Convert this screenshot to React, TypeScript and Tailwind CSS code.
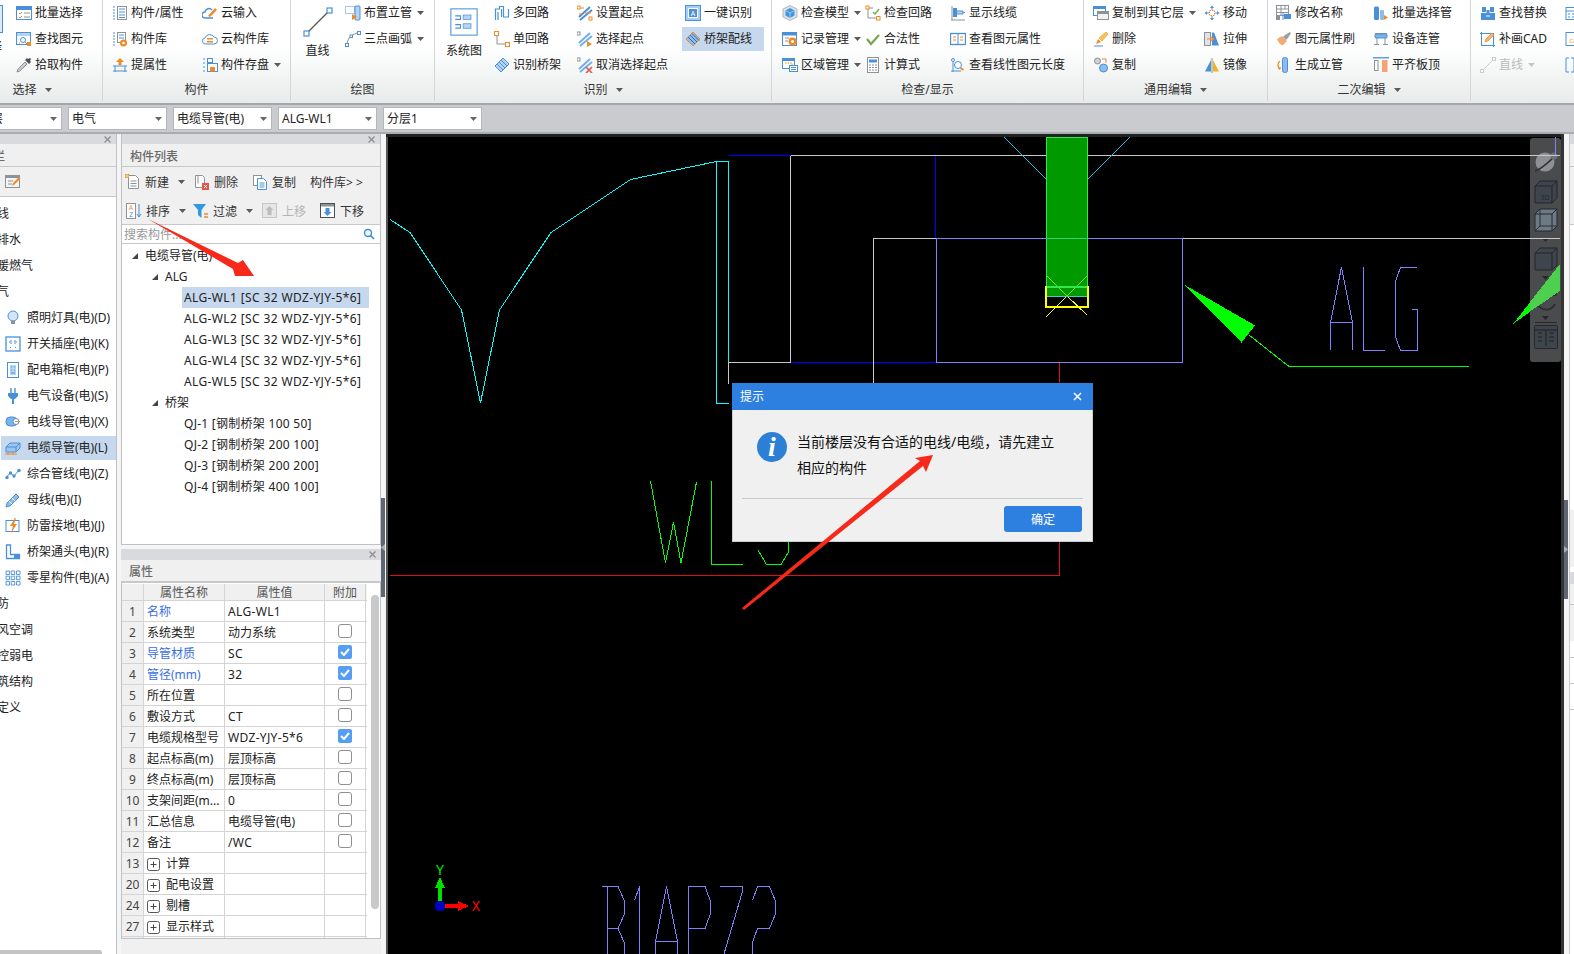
import React from "react";

const B = "#4a90d9", L = "#b5d3f3", O = "#f08a24", G = "#8d9298", D = "#4a5058";

const ICONS: Record<string, React.ReactNode> = {
  plxz: <><rect x=".5" y="1.5" width="15" height="13" fill="#fff" stroke={B} /><rect x="1" y="2" width="14" height="3" fill={B} /><path d="M3 8l1 1 2-2M3 12l1 1 2-2" stroke={O} /><path d="M8 8h6M8 12h6" stroke={G} /></>,
  czty: <><rect x=".5" y="1.5" width="14" height="12" fill="#fff" stroke={B} /><rect x="1" y="2" width="13" height="3" fill={L} /><circle cx="7" cy="9" r="2.5" stroke={B} /><path d="M4 12h-1M9 11l2 2" stroke={G} /><rect x="11" y="11" width="4" height="4" fill={O} /></>,
  nqgj: <><path d="M1 15l1-3 7-7 2 2-7 7z" fill="#c9ccd0" stroke={G} /><path d="M9 3l4 4 2-2-1-1 1-2-1-1-2 1-1-1z" fill={D} /></>,
  gjsx: <><path d="M1 2h2M1 5h2M1 8h2M1 11h2M1 14h2" stroke={B} /><rect x="5.5" y="1.5" width="9" height="13" fill="#fff" stroke={G} /><path d="M7 4h6M7 7h6M7 10h6M7 12.500h6" stroke={B} /></>,
  syr: <><path d="M3 13a3 3 0 0 1 0-6 4 4 0 0 1 7-2" stroke={B} strokeWidth="1.5" /><path d="M3 13h8" stroke={B} strokeWidth="1.5" /><path d="M6 11l7-8 2 2-7 7z" fill={O} /></>,
  gjk: <><path d="M1 2h2M1 5h2M1 8h2M1 11h2M1 14h2" stroke={B} /><rect x="5.500" y="1.500" width="8" height="10" fill="#fff" stroke={G} /><path d="M7 4h5M7 7h5" stroke={B} /><circle cx="11.500" cy="12" r="3.500" fill={O} /><circle cx="11.500" cy="12" r="1.300" fill="#fff" /></>,
  ygjk: <><path d="M4 13a3 3 0 0 1-1-6 5 5 0 0 1 9-1 3.500 3.500 0 0 1 0 7z" fill="#fff" stroke={B} /><rect x="5" y="7" width="6" height="1.500" fill={O} /><rect x="5" y="10" width="6" height="1.500" fill={O} /></>,
  tsx: <><path d="M8 1l4 4H9.500v3h-3V5H4z" fill={O} /><path d="M1 9h14M3 9v6M13 9v6M1 14h14" stroke={B} /></>,
  gjcp: <><path d="M1 2h2M1 6h2M1 10h2M1 14h2" stroke={B} /><rect x="5.500" y="1.500" width="5" height="4" fill="#fff" stroke={B} /><rect x="5.500" y="6.500" width="10" height="8" fill="#fff" stroke={B} /><rect x="8" y="10" width="5" height="4.500" fill={O} /></>,
  bzlg: <><rect x=".5" y="1.500" width="9" height="7" fill="#fff" stroke={B} strokeDasharray="1 1" /><rect x="10" y="1" width="5" height="14" rx="1" fill={L} stroke={B} /><path d="M7 9l5 3-5 3z" fill={O} /></>,
  sdhh: <><path d="M2 14C2 8 6 4 12 2" stroke={G} /><rect x=".5" y="12.500" width="3" height="3" fill="#fff" stroke={B} /><rect x="12.500" y=".5" width="3" height="3" fill="#fff" stroke={B} /><rect x="5" y="4" width="2.500" height="2.500" fill="#fff" stroke={B} /></>,
  xl: <><path d="M2.500 13.500l11-11" stroke="#555" strokeWidth=".6" /><rect x="1" y="12.500" width="2.500" height="2.500" fill="#fff" stroke={B} strokeWidth=".6" /><rect x="12.500" y="1" width="2.500" height="2.500" fill="#fff" stroke={B} strokeWidth=".6" /></>,
  xtt: <><rect x=".5" y=".5" width="15" height="15" fill="#fff" stroke={B} strokeWidth=".6" /><rect x="7.500" y="4" width="4.500" height="2.600" fill={L} stroke={B} strokeWidth=".4" /><rect x="7.500" y="9" width="4.500" height="2.600" fill={L} stroke={B} strokeWidth=".4" /><path d="M3 4.500h3v2H3M3 9.500h3v2H3" stroke={B} strokeWidth=".6" /></>,
  dhl: <><path d="M1.500 15V4h4V1.500h4V12h5V4M4 15V7M7.500 12V4" stroke={B} strokeWidth="1.200" /></>,
  dhl1: <><path d="M3 3v10h9" stroke={G} /><rect x=".5" y=".5" width="4" height="4" fill="#fff" stroke={O} /><rect x="11.500" y="11.500" width="4" height="4" fill="#fff" stroke={O} /></>,
  sbqj: <><path d="M1 9l8-8 6 6-8 8z" fill={L} stroke={B} /><path d="M5 5l6 6M7 3l6 6M3 7l6 6" stroke={B} /></>,
  szqd: <><path d="M2 12L13 2M3 15L15 5" stroke={B} strokeWidth="2" /><path d="M2 3h5M8 8h6M2 9h3" stroke={O} /><rect x="0" y="1" width="3" height="3" fill="#fff" stroke={O} /><rect x="12" y="12" width="3" height="3" fill="#fff" stroke={O} /></>,
  xzqd: <><path d="M2 12L13 2M3 15L15 5" stroke="#73b0ee" strokeWidth="2" /><rect x="0" y="1" width="3" height="3" fill="#fff" stroke={G} /><path d="M10 10l5 3-5 3z" fill={O} /></>,
  qxqd: <><path d="M2 12L13 2M3 15L15 5" stroke="#73b0ee" strokeWidth="2" /><rect x="0" y="1" width="3" height="3" fill="#fff" stroke={G} /><path d="M9 10l6 6M15 10l-6 6" stroke="#e2574c" strokeWidth="1.600" /></>,
  yjsb: <><rect x=".5" y=".5" width="15" height="15" fill="#a7cdf3" stroke={B} /><rect x="3.500" y="3.500" width="9" height="9" fill={B} stroke="#fff" /><text x="8" y="11" fontSize="7" fill="#fff" textAnchor="middle">A</text></>,
  qjpx: <><path d="M1 8l7-7 7 7-7 7z" fill="#8fbdf0" stroke={O} /><path d="M5 4l7 7M7 2.500l7 7M3 6l7 7" stroke="#2f6db5" /></>,
  jcmx: <><path d="M8 .5l7 3.500v8l-7 3.500-7-3.500V4z" fill="#dde0e3" stroke="#b3b7bc" /><path d="M8 3l4.500 2.500v5L8 13l-4.500-2.500v-5z" fill="#3f95e0" /><path d="M3.500 5.500L8 8l4.500-2.500M8 8v5" stroke="#bfe0fb" strokeWidth=".7" /></>,
  jlgl: <><rect x=".5" y="1.500" width="14" height="13" fill="#fff" stroke={B} /><rect x="1" y="2" width="13" height="2.500" fill={B} /><path d="M3 7h4M3 10h3" stroke={G} /><circle cx="10.500" cy="10.500" r="4" fill={O} /><circle cx="10.500" cy="10.500" r="1.500" fill="#fff" /></>,
  qygl: <><rect x=".5" y="1.500" width="12" height="10" fill="#fff" stroke={B} /><rect x="1" y="2" width="11" height="2" fill={B} /><path d="M3 6h7v3" stroke={O} strokeDasharray="1.500 1" /><rect x="7.500" y="8.500" width="8" height="6" fill="#fff" stroke={B} /><path d="M9 10.500h5M9 12.500h5" stroke={B} /></>,
  jchl: <><path d="M3 3v10h9M4 3h4" stroke={G} /><rect x="1" y="1" width="3" height="3" fill="#fff" stroke={O} /><rect x="11.500" y="11.500" width="3.500" height="3.500" fill="#fff" stroke={O} /><path d="M8 7l2 2 4-5" stroke="#6fa84a" strokeWidth="1.300" /></>,
  hfx: <path d="M2 8l4 5 8-9" stroke="#72a94a" strokeWidth="2.200" />,
  jss: <><rect x="2.500" y=".5" width="11" height="15" fill="#fff" stroke={G} /><rect x="4" y="2.500" width="8" height="3" fill={B} /><path d="M4 8h2M7 8h2M10 8h2M4 10.500h2M7 10.500h2M10 10.500h2M4 13h2M7 13h2M10 13h2" stroke={G} /></>,
  xsxl: <><path d="M2 1v14M1 15h14" stroke={G} /><rect x="3" y="3" width="4" height="9" fill={B} /><path d="M7 6h6v3H7" fill={L} stroke={B} /><path d="M13 7.500h2" stroke={B} /></>,
  ckty: <><rect x=".5" y="2.500" width="15" height="11" fill="#fff" stroke={B} strokeWidth="1.300" /><path d="M8 3v10" stroke={B} /><path d="M3 6h3M3 9h3M10 6h3M10 9h3" stroke={O} /></>,
  ckcd: <><path d="M3 1v14M1 14h10" stroke={B} /><circle cx="3" cy="3" r="1.500" fill="#fff" stroke={B} /><circle cx="8" cy="8" r="3.500" fill="#fff" stroke={B} /><path d="M10.500 11l3 2" stroke={O} strokeWidth="2" /></>,
  fzdq: <><rect x=".5" y="1.500" width="12" height="9" fill="#fff" stroke={B} /><rect x="1" y="2" width="11" height="2" fill={B} /><rect x="4.500" y="6.500" width="11" height="8" fill="#f2f2f2" stroke={G} /><rect x="5" y="7" width="10" height="2" fill={G} /></>,
  sc: <><path d="M1 15h9" stroke={B} /><path d="M3 13l2-5 3 3z" fill={O} /><path d="M6 7l7-6 2 2-6 7z" fill="#f2c65a" stroke={O} strokeWidth=".6" /></>,
  fz: <><circle cx="4.500" cy="4" r="3" fill="#cfd2d6" stroke={G} /><circle cx="10.500" cy="11" r="4" fill="#8cbcee" stroke={B} /><path d="M9 2h4v4" stroke={O} /></>,
  yd: <><path d="M8 .5l2 2.500H6zM8 15.500L6 13h4zM.5 8L3 6v4zM15.500 8L13 10V6z" fill={B} /><path d="M8 3v2M8 11v2M3 8h2M11 8h2" stroke={B} /><rect x="5.500" y="5.500" width="5" height="5" fill="#fff" stroke={O} strokeDasharray="1.500 1" /></>,
  ls: <><rect x=".5" y="1.500" width="6" height="13" fill="#e1e3e6" stroke={G} /><path d="M8 14.500V1.500h2l5 13z" fill={B} /><path d="M3 8h6M7 6l3 2-3 2" stroke={O} strokeWidth="1.100" /></>,
  jx: <><path d="M7 14.500H1L7 3z" fill={B} /><path d="M9 14.500h6L9 3z" fill="#f2b227" /><path d="M8 1v15" stroke={G} /></>,
  xgmc: <><rect x=".5" y=".5" width="12" height="10" fill="#fff" stroke={G} /><path d="M1 4h11M1 7.500h11M5 1v10M9 1v3" stroke={G} /><rect x="0" y="11" width="4" height="4" fill={G} /><path d="M7 7v8" stroke={B} /><rect x="8" y="9" width="7" height="5" fill={B} /></>,
  tysx: <><path d="M1 8l5-3 5 5-4 4c-2 1-5-3-6-6z" fill="#f3a877" /><path d="M7 6l2-2 5-3 1 1-3 5-2 2z" fill="#9b9ea3" /></>,
  sclg: <><path d="M4 4a5 5 0 0 0 0 8" stroke={O} strokeWidth="1.300" /><path d="M2 11l2 2 1-3z" fill={O} /><rect x="6.500" y=".5" width="5" height="15" rx="2" fill="#8cbcee" stroke={B} /></>,
  plxg: <><rect x="1" y="1.500" width="5" height="13.500" rx="1.500" fill={B} /><rect x="7" y="5" width="4" height="10" rx="1" fill="#8cbcee" /><path d="M11 10l4 2.500-4 2.500z" fill={O} /></>,
  sblg: <><path d="M2 2.500h12M1 13.500h5M10 13.500h5M4 7v6M12 7v6" stroke={G} /><rect x="2" y="3" width="12" height="4" rx="1" fill="#7db2ea" stroke={B} /></>,
  pqbd: <><path d="M0 .8h16" stroke={B} strokeWidth="1.300" /><rect x="1.500" y="3.500" width="3.500" height="10" fill="#fff" stroke={G} /><rect x="9" y="3" width="5.500" height="12" fill="#f7a275" /></>,
  czth: <><path d="M1 8h14v7H1zM2 2h4v5H2zM10 2h4v5h-4z" fill={B} /><rect x="6.500" y="5" width="3" height="3" fill={B} /><path d="M6 11h4" stroke="#fff" /></>,
  bhcad: <><rect x="1.500" y="2.500" width="12" height="12" fill="#fff" stroke={B} /><path d="M1.500 1v3M0 2.500h3M13.500 13v3M12 14.500h3" stroke={B} /><path d="M5 11l1-3 6-6 2 2-6 6z" fill="#f2b86a" stroke={O} strokeWidth=".7" /></>,
  zxd: <><path d="M2 14L14 2" stroke="#c9cbce" /><rect x=".5" y="12.500" width="3" height="3" fill="#fff" stroke="#c9cbce" /><rect x="12.500" y=".5" width="3" height="3" fill="#fff" stroke="#c9cbce" /></>,
  r1: <><rect x="1" y="2.500" width="14" height="12" fill="#fff" stroke={B} /><path d="M1 6h14" stroke={B} /><path d="M3 9h2M7 9h2M11 9h2M3 12h2M7 12h2M11 12h2" stroke={B} /></>,
  r2: <><rect x="1" y="1.500" width="14" height="13" fill="#fff" stroke={B} /><text x="8" y="12" fontSize="6" fill={O} textAnchor="middle">CA</text></>,
  r3: <path d="M4 1H1v14h3M6 1h3v14H6" stroke={B} />,
  zmdj: <><circle cx="8" cy="6" r="5" fill="#d3e6f7" stroke={B} /><path d="M6 11h4v3H6z" fill={G} /></>,
  kgcz: <><rect x="1" y="1" width="14" height="14" fill="#fff" stroke={B} strokeWidth="1.300" /><path d="M6 4v4M10 4v4M4 6h1M11 6h1M5 11l1 1M11 11l-1 1" stroke={B} /></>,
  pdxg: <><rect x="2.500" y=".5" width="11" height="15" fill="#fff" stroke={B} /><rect x="5" y="3" width="6" height="10" fill={L} /><path d="M6 5h1M9 5h1M6 8h1M9 8h1M6 11h4" stroke={B} /></>,
  dqsb: <><path d="M6 0v5M10 0v5" stroke={B} strokeWidth="1.400" /><path d="M3 5h10v3l-3 3H6L3 8z" fill={B} /><path d="M8 11v5" stroke={B} strokeWidth="2" /></>,
  dxdg: <><rect x="1" y="3" width="11" height="9" rx="4" fill="#7db2ea" stroke={B} /><circle cx="11" cy="7.500" r="3" fill="#fff" stroke={B} /><path d="M10 7.500h5" stroke={O} /></>,
  dlxg: <><path d="M1 7l4-4h10v5l-4 4H1z" fill="#9cc4ee" stroke={B} /><path d="M1 7h10v5M11 7l4-4" stroke={B} /><path d="M0 14h12M3 12v3M8 12v3" stroke={O} /></>,
  zhgx: <><path d="M1 12l4-5 4 3 5-6" stroke={B} /><circle cx="2" cy="11.500" r="1.700" fill={B} /><circle cx="5.500" cy="7" r="1.700" fill={B} /><circle cx="9" cy="10" r="1.700" fill={B} /><circle cx="14" cy="4.500" r="1.700" fill={B} /></>,
  mx: <><path d="M2 11L11 2l3 3-9 9-4 1z" fill="#8cbcee" stroke={B} /><path d="M4 9l3 3M7 6l3 3" stroke="#fff" /></>,
  fljd: <><rect x="1" y="2.500" width="13" height="11" fill="#fff" stroke={B} /><path d="M10 0L5 8h3l-2 7 6-9H9l2-6z" fill={O} /></>,
  qjtt: <><path d="M1.500 1v13.500h13v-4H5.500V1z" fill="#fff" stroke={B} strokeWidth="1.300" /><rect x="9" y="11" width="6" height="3.500" fill={B} /></>,
  lxgj: <><path d="M1 1h3.500v3.500H1zM6.200 1h3.500v3.500H6.200zM11.500 1H15v3.500h-3.500zM1 6.200h3.500v3.500H1zM6.200 6.200h3.500v3.500H6.200zM11.500 6.200H15v3.500h-3.500zM1 11.500h3.500V15H1zM6.200 11.500h3.500V15H6.200zM11.500 11.500H15V15h-3.500z" fill="#fff" stroke={B} strokeWidth=".9" /></>,
  nav: <><rect x=".5" y="1.500" width="14" height="12" fill="#f5f5f5" stroke={G} /><rect x="1" y="2" width="13" height="2" fill={G} /><path d="M3 7h5M3 10h4" stroke={G} /><path d="M7 12l1-3 6-6 1.500 1.500-6 6z" fill={O} /></>,
  xj: <><path d="M3.500 1.500h7l3 3v10h-10z" fill="#fff" stroke={G} /><path d="M5.500 7h6M5.500 9.500h6M5.500 12h6" stroke={G} /><rect x="0" y="0" width="4" height="4" fill={O} /><path d="M0 2h4M2 0v4" stroke="#fff" strokeWidth=".6" /></>,
  sc2: <><path d="M1.500 1.500h7l2 2v10h-9z" fill="#fff" stroke={G} /><path d="M4 1.500v8" stroke={G} /><rect x="8" y="9" width="7" height="7" fill="#e2574c" /><path d="M10 11l3 3M13 11l-3 3" stroke="#fff" /></>,
  fz2: <><rect x="1.500" y="1.500" width="8" height="10" fill="#fff" stroke={G} /><path d="M5.500 4.500h6l3 3v8h-9z" fill="#fff" stroke={B} /><path d="M7.500 9h5M7.500 11h5M7.500 13h5" stroke={B} /></>,
  pxn: <><rect x=".5" y=".5" width="9" height="15" fill="#fff" stroke={G} /><text x="5" y="7" fontSize="6.500" fill={O} textAnchor="middle">A</text><text x="5" y="14" fontSize="6.500" fill={B} textAnchor="middle">Z</text><path d="M13 1v13M11 11l2 3 2-3" stroke={B} /></>,
  gl: <><path d="M0 1h13L8.500 7v8L5 12V7z" fill="#2f9ae0" /><path d="M11 11h4M11 14h4" stroke={O} strokeWidth="1.300" /></>,
  sy: <><rect x=".5" y=".5" width="14" height="14" fill="#e6e6e6" stroke="#c6c6c6" /><path d="M7.500 3l4 4H9.500v5h-4V7h-2z" fill="#bcbcbc" /></>,
  xy: <><rect x=".5" y=".5" width="14" height="14" fill="#fff" stroke={D} /><rect x="1" y="1" width="13" height="2.500" fill={G} /><path d="M5.500 5h4v4h2l-4 4-4-4h2z" fill={B} /></>,
};

const Ico = ({ n, s = 16 }: { n: string; s?: number }) => (
  <svg width={s} height={s} viewBox="0 0 16 16" fill="none" className="shrink-0">{ICONS[n]}</svg>
);

const Caret = ({ c = "#5a5a5a" }: { c?: string }) => (
  <svg width="7" height="4" viewBox="0 0 7 4" className="shrink-0"><path d="M0 0h7L3.500 4z" fill={c} /></svg>
);

const Close = () => (
  <svg width="7" height="7" viewBox="0 0 7 7" className="shrink-0"><path d="M.5.5l6 6M6.500.5l-6 6" stroke="#8a8d92" strokeWidth="1.300" /></svg>
);

const Item = ({ i, t, c, off, on }: { i: string; t: string; c?: boolean; off?: boolean; on?: boolean }) => (
  <div className={`flex h-[26px] items-center gap-[3px] whitespace-nowrap ${off ? "text-[#b9bbbe]" : "text-[#222]"}`}>
    <div className={on ? "flex h-[24px] w-[82px] items-center gap-[3px] bg-[#c6d8ee] pl-[3px]" : "flex items-center gap-[3px]"}>
      <Ico n={i} />
      <span>{t}</span>
    </div>
    {c && <span className="ml-[2px]"><Caret c={off ? "#c4c4c4" : "#5a5a5a"} /></span>}
  </div>
);

const Group = ({ label, caret, className, pad, children }: { label: string; caret?: boolean; className: string; pad: string; children: React.ReactNode }) => (
  <section className={`flex h-[101px] shrink-0 flex-col border-r border-[#d3d5d7] ${className}`}>
    <div className={`flex h-[78px] ${pad}`}>{children}</div>
    <div className="flex h-[23px] items-center justify-center gap-[8px] text-[#333]">
      <span>{label}</span>
      {caret && <Caret />}
    </div>
  </section>
);

const Big = ({ i, t, s, className }: { i: string; t: string; s: number; className: string }) => (
  <div className={`flex shrink-0 flex-col items-center ${className}`}>
    <div className="flex h-[40px] items-center pt-[4px]"><Ico n={i} s={s} /></div>
    <span className="mt-[3px] whitespace-nowrap leading-[16px] text-[#222]">{t}</span>
  </div>
);

const Ribbon = () => (
  <header className="flex h-[103px] shrink-0 bg-gradient-to-b from-white from-45% to-[#e8ebeb]">
    <Group label="选择" caret className="ml-[-38px] w-[141px]" pad="">
      <div className="relative w-[54px] shrink-0">
        <div className="ml-[12px] mt-[5px] h-[28px] w-[29px] border border-[#4a90d9] bg-[#dbe9f8]" />
        <span className="absolute left-[16px] top-[39px] leading-[16px]">选择</span>
      </div>
      <div>
        <Item i="plxz" t="批量选择" />
        <Item i="czty" t="查找图元" />
        <Item i="nqgj" t="拾取构件" />
      </div>
    </Group>
    <Group label="构件" className="w-[188px]" pad="pl-[9px]">
      <div className="w-[90px] shrink-0">
        <Item i="gjsx" t="构件/属性" />
        <Item i="gjk" t="构件库" />
        <Item i="tsx" t="提属性" />
      </div>
      <div>
        <Item i="syr" t="云输入" />
        <Item i="ygjk" t="云构件库" />
        <Item i="gjcp" t="构件存盘" c />
      </div>
    </Group>
    <Group label="绘图" className="w-[144px]" pad="pl-[8px]">
      <Big i="xl" t="直线" s={32} className="mr-[9px] w-[37px]" />
      <div>
        <Item i="bzlg" t="布置立管" c />
        <Item i="sdhh" t="三点画弧" c />
      </div>
    </Group>
    <Group label="识别" caret className="w-[337px]" pad="pl-[6px]">
      <Big i="xtt" t="系统图" s={28} className="mr-[7px] w-[46px]" />
      <div className="w-[83px] shrink-0">
        <Item i="dhl" t="多回路" />
        <Item i="dhl1" t="单回路" />
        <Item i="sbqj" t="识别桥架" />
      </div>
      <div className="w-[105px] shrink-0">
        <Item i="szqd" t="设置起点" />
        <Item i="xzqd" t="选择起点" />
        <Item i="qxqd" t="取消选择起点" />
      </div>
      <div className="pl-[3px]">
        <Item i="yjsb" t="一键识别" />
        <div className="ml-[-3px]"><Item i="qjpx" t="桥架配线" on /></div>
      </div>
    </Group>
    <Group label="检查/显示" className="w-[312px]" pad="pl-[10px]">
      <div className="w-[83px] shrink-0">
        <Item i="jcmx" t="检查模型" c />
        <Item i="jlgl" t="记录管理" c />
        <Item i="qygl" t="区域管理" c />
      </div>
      <div className="w-[85px] shrink-0">
        <Item i="jchl" t="检查回路" />
        <Item i="hfx" t="合法性" />
        <Item i="jss" t="计算式" />
      </div>
      <div>
        <Item i="xsxl" t="显示线缆" />
        <Item i="ckty" t="查看图元属性" />
        <Item i="ckcd" t="查看线性图元长度" />
      </div>
    </Group>
    <Group label="通用编辑" caret className="w-[184px]" pad="pl-[9px]">
      <div className="w-[111px] shrink-0">
        <Item i="fzdq" t="复制到其它层" c />
        <Item i="sc" t="删除" />
        <Item i="fz" t="复制" />
      </div>
      <div>
        <Item i="yd" t="移动" />
        <Item i="ls" t="拉伸" />
        <Item i="jx" t="镜像" />
      </div>
    </Group>
    <Group label="二次编辑" caret className="w-[203px]" pad="pl-[8px]">
      <div className="w-[97px] shrink-0">
        <Item i="xgmc" t="修改名称" />
        <Item i="tysx" t="图元属性刷" />
        <Item i="sclg" t="生成立管" />
      </div>
      <div>
        <Item i="plxg" t="批量选择管" />
        <Item i="sblg" t="设备连管" />
        <Item i="pqbd" t="平齐板顶" />
      </div>
    </Group>
    <section className="flex h-[78px] pl-[9px]">
      <div className="w-[85px] shrink-0">
        <Item i="czth" t="查找替换" />
        <Item i="bhcad" t="补画CAD" />
        <Item i="zxd" t="直线" c off />
      </div>
      <div>
        <Item i="r1" t="" />
        <Item i="r2" t="" />
        <Item i="r3" t="" />
      </div>
    </section>
  </header>
);

const Select = ({ t, className }: { t: string; className: string }) => (
  <div className={`flex h-[23px] w-[99px] shrink-0 items-center justify-between border border-[#b4b6ba] bg-white pr-[4px] text-[#222] ${className}`}>
    <span>{t}</span>
    <Caret c="#666" />
  </div>
);

const Toolbar = () => (
  <div className="flex h-[31px] shrink-0 items-center gap-[6px] border-t-2 border-b-2 border-t-[#a4a7aa] border-b-[#a9acb0] bg-[#c9cbce]">
    <Select t="首层" className="ml-[-37px] pl-[15px]" />
    <Select t="电气" className="pl-[3px]" />
    <Select t="电缆导管(电)" className="pl-[3px]" />
    <Select t="ALG-WL1" className="pl-[3px]" />
    <Select t="分层1" className="pl-[3px]" />
  </div>
);

const navTree: [string | null, string][] = [
  [null, "轴线"], [null, "给排水"], [null, "采暖燃气"], [null, "电气"],
  ["zmdj", "照明灯具(电)(D)"], ["kgcz", "开关插座(电)(K)"], ["pdxg", "配电箱柜(电)(P)"], ["dqsb", "电气设备(电)(S)"],
  ["dxdg", "电线导管(电)(X)"], ["dlxg", "电缆导管(电)(L)"], ["zhgx", "综合管线(电)(Z)"], ["mx", "母线(电)(I)"],
  ["fljd", "防雷接地(电)(J)"], ["qjtt", "桥架通头(电)(R)"], ["lxgj", "零星构件(电)(A)"],
  [null, "消防"], [null, "通风空调"], [null, "智控弱电"], [null, "建筑结构"], [null, "自定义"],
];

const PanelHead = ({ title, offset }: { title: string; offset?: boolean }) => (
  <>
    <div className="flex h-[10px] shrink-0 items-center justify-end bg-[#d8dade] pr-[5px]"><Close /></div>
    <div className={`flex h-[23px] shrink-0 items-center whitespace-nowrap border-b border-[#c6c8ca] bg-[#f0f0f0] pt-[3px] font-medium text-[#6b6b6b] ${offset ? "ml-[-31px]" : "pl-[8px]"}`}>{title}</div>
  </>
);

const LeftPanel = () => (
  <aside className="flex w-[117px] shrink-0 flex-col overflow-hidden border-r border-[#bfc1c4] bg-white">
    <PanelHead title="导航栏" offset />
    <div className="flex h-[30px] shrink-0 items-center border-b border-[#c6c8ca] bg-[#f0f0f0] pl-[5px]"><Ico n="nav" /></div>
    <div className="flex flex-1 flex-col pt-[4px] text-[#222]">
      {navTree.map(([i, t]) =>
        i ? (
          <div key={t} className="flex h-[26px] items-center pl-[1px]">
            <div className={`flex h-[24px] w-full items-center gap-[6px] whitespace-nowrap pl-[4px] ${t === "电缆导管(电)(L)" ? "bg-[#c6d8ee]" : ""}`}>
              <Ico n={i} />
              <span>{t}</span>
            </div>
          </div>
        ) : (
          <div key={t} className="ml-[-15px] flex h-[26px] items-center whitespace-nowrap">{t}</div>
        )
      )}
      <div className="mt-auto h-[4px] w-[102px] rounded-tr-[3px] bg-[#c4c4c4]" />
    </div>
  </aside>
);

const Tool = ({ i, t, c, off, className }: { i: string; t: string; c?: boolean; off?: boolean; className: string }) => (
  <div className={`flex shrink-0 items-center gap-[4px] whitespace-nowrap ${off ? "text-[#b5b5b5]" : "text-[#333]"} ${className}`}>
    <Ico n={i} />
    <span className="pt-[2px]">{t}</span>
    {c && <span className="ml-[5px]"><Caret /></span>}
  </div>
);

const Tri = () => (
  <svg width="6" height="6" viewBox="0 0 6 6" className="shrink-0"><path d="M6 0v6H0z" fill="#444" /></svg>
);

const alg = ["ALG-WL1", "ALG-WL2", "ALG-WL3", "ALG-WL4", "ALG-WL5"];
const qj = ["QJ-1 [钢制桥架 100 50]", "QJ-2 [钢制桥架 200 100]", "QJ-3 [钢制桥架 200 200]", "QJ-4 [钢制桥架 400 100]"];

const ListPanel = () => (
  <section className="flex h-[411px] shrink-0 flex-col border border-t-0 border-[#bfc1c4] bg-white">
    <PanelHead title="构件列表" />
    <div className="flex h-[29px] shrink-0 items-center bg-[#f0f0f0] pl-[3px]">
      <Tool i="xj" t="新建" c className="w-[69px]" />
      <Tool i="sc2" t="删除" className="w-[58px]" />
      <Tool i="fz2" t="复制" className="w-[58px]" />
      <span className="whitespace-pre pt-[2px] text-[#333]">构件库&gt; &gt;</span>
    </div>
    <div className="flex h-[29px] shrink-0 items-center border-b border-[#c6c8ca] bg-[#f0f0f0] pl-[4px] pt-[1px]">
      <Tool i="pxn" t="排序" c className="w-[67px]" />
      <Tool i="gl" t="过滤" c className="w-[69px]" />
      <Tool i="sy" t="上移" off className="w-[58px]" />
      <Tool i="xy" t="下移" className="w-[58px]" />
    </div>
    <div className="flex h-[19px] shrink-0 items-center justify-between border-b border-[#c6c8ca] pl-[2px] pr-[5px] text-[#9a9a9a]">
      <span className="pt-[2px]">搜索构件...</span>
      <svg width="12" height="12" viewBox="0 0 12 12" fill="none"><circle cx="5" cy="5" r="3.500" stroke="#2f8fdc" strokeWidth="1.400" /><path d="M7.500 7.500L11 11" stroke="#2f8fdc" strokeWidth="1.600" /></svg>
    </div>
    <div className="flex flex-col pt-[1px] text-[#222]">
      <div className="flex h-[21px] items-center gap-[7px] pl-[10px]"><Tri /><span>电缆导管(电)</span></div>
      <div className="flex h-[21px] items-center gap-[7px] pl-[30px]"><Tri /><span>ALG</span></div>
      {alg.map((a, idx) => (
        <div key={a} className={`ml-[60px] flex h-[21px] w-[187px] items-center whitespace-nowrap pl-[2px] tracking-[0.37px] ${idx === 0 ? "bg-[#c6d8ee]" : ""}`}>{a} [SC 32 WDZ-YJY-5*6]</div>
      ))}
      <div className="flex h-[21px] items-center gap-[7px] pl-[30px]"><Tri /><span>桥架</span></div>
      {qj.map((q) => (
        <div key={q} className="ml-[62px] flex h-[21px] items-center whitespace-nowrap tracking-[0.27px]">{q}</div>
      ))}
    </div>
  </section>
);

type Row = { n: number; k: string; v?: string; blue?: boolean; box?: "on" | "off"; group?: boolean };
const rows: Row[] = [
  { n: 1, k: "名称", v: "ALG-WL1", blue: true },
  { n: 2, k: "系统类型", v: "动力系统", box: "off" },
  { n: 3, k: "导管材质", v: "SC", blue: true, box: "on" },
  { n: 4, k: "管径(mm)", v: "32", blue: true, box: "on" },
  { n: 5, k: "所在位置", box: "off" },
  { n: 6, k: "敷设方式", v: "CT", box: "off" },
  { n: 7, k: "电缆规格型号", v: "WDZ-YJY-5*6", box: "on" },
  { n: 8, k: "起点标高(m)", v: "层顶标高", box: "off" },
  { n: 9, k: "终点标高(m)", v: "层顶标高", box: "off" },
  { n: 10, k: "支架间距(m...", v: "0", box: "off" },
  { n: 11, k: "汇总信息", v: "电缆导管(电)", box: "off" },
  { n: 12, k: "备注", v: "/WC", box: "off" },
  { n: 13, k: "计算", group: true },
  { n: 20, k: "配电设置", group: true },
  { n: 24, k: "剔槽", group: true },
  { n: 27, k: "显示样式", group: true },
];

const Check = ({ on }: { on: boolean }) =>
  on ? (
    <span className="mb-[2px] flex h-[14px] w-[14px] items-center justify-center rounded-[2px] bg-[#559df5]">
      <svg width="10" height="8" viewBox="0 0 10 8" fill="none"><path d="M1 4l3 3 5-6" stroke="#fff" strokeWidth="2" /></svg>
    </span>
  ) : (
    <span className="mb-[2px] h-[14px] w-[14px] rounded-[3px] border border-[#8f8f8f] bg-white" />
  );

const PropsPanel = () => (
  <section className="flex flex-1 flex-col">
    <div className="flex h-[11px] shrink-0 items-center justify-end bg-[#d8dade] pr-[5px]"><Close /></div>
    <div className="flex h-[23px] shrink-0 items-center border-b-2 border-[#c6c8ca] bg-[#f0f0f0] pl-[8px] pt-[3px] font-medium text-[#6b6b6b]">属性</div>
    <div className="flex h-[356px] shrink-0 overflow-hidden border-x border-b border-[#bfc1c4] bg-white pt-[1px]">
      <div className="w-[245px] shrink-0">
        <div className="flex h-[17px] border-b border-[#d4d4d4] bg-[#f0f0f0] text-[#555]">
          <div className="w-[22px] border-r border-[#d4d4d4]" />
          <div className="w-[81px] border-r border-[#d4d4d4] text-center leading-[18px]">属性名称</div>
          <div className="w-[100px] border-r border-[#d4d4d4] text-center leading-[18px]">属性值</div>
          <div className="w-[41px] border-r border-[#d4d4d4] text-center leading-[18px]">附加</div>
        </div>
        {rows.map((r) => (
          <div key={r.n} className="flex h-[21px] border-b border-[#d4d4d4] text-[#222]">
            <div className="flex w-[22px] items-center justify-center border-r border-[#d4d4d4] bg-[#f0f0f0] pt-[2px] text-[#444]">{r.n}</div>
            <div className={`flex w-[81px] items-center whitespace-nowrap border-r border-[#d4d4d4] pl-[3px] pt-[2px] ${r.blue ? "text-[#3a6fe0]" : ""} ${r.group ? "gap-[6px]" : ""}`}>
              {r.group && (
                <svg width="13" height="13" viewBox="0 0 13 13" fill="none" className="shrink-0"><rect x=".5" y=".5" width="12" height="12" rx="2" stroke="#555" /><path d="M3.500 6.500h6M6.500 3.500v6" stroke="#444" /></svg>
              )}
              <span>{r.k}</span>
            </div>
            <div className={`flex w-[100px] items-center whitespace-nowrap border-r border-[#d4d4d4] pl-[3px] pt-[2px] ${r.v && /^[A-Z0-9/]/.test(r.v) ? "tracking-[0.33px]" : ""}`}>{r.v}</div>
            <div className="flex w-[41px] items-center justify-center border-r border-[#d4d4d4]">
              {r.box && <Check on={r.box === "on"} />}
            </div>
          </div>
        ))}
        <div className="flex h-[3px]">
          <div className="w-[22px] border-r border-[#d4d4d4] bg-[#f0f0f0]" />
          <div className="w-[81px] border-r border-[#d4d4d4]" />
          <div className="w-[100px] border-r border-[#d4d4d4]" />
          <div className="w-[41px] border-r border-[#d4d4d4]" />
        </div>
      </div>
      <div className="pl-[4px] pt-[11px]">
        <div className="h-[314px] w-[8px] rounded-[4px] bg-[#c9c9c9]" />
      </div>
    </div>
    <div className="flex-1 bg-[#f0f0f0]" />
  </section>
);

const Splitter = ({ flip, top }: { flip?: boolean; top: string }) => (
  <div className={`flex w-[5px] shrink-0 flex-col bg-[#f5f5f5] ${top}`}>
    <div className="flex h-[99px] w-[4px] items-center justify-center bg-[#5e6670]">
      <svg width="4" height="7" viewBox="0 0 4 7"><path d={flip ? "M0 0l4 3.500L0 7z" : "M4 0L0 3.500 4 7z"} fill="#aab0b6" /></svg>
    </div>
  </div>
);

const P = "#8080ff";

const Drawing = () => (
  <svg width="1176" height="820" viewBox="386 134 1176 820" fill="none" shapeRendering="crispEdges" className="absolute left-0 top-0">
    <rect x="386" y="134" width="2" height="820" fill="#555" />
    <rect x="386" y="134" width="1176" height="2.500" fill="#222" />
    <rect x="1561" y="134" width="1" height="820" fill="#333" />
    <path d="M390 219.500L410 232.500L461.500 310L480.500 403L499.500 310L551 232.500L630.500 179.500L716.500 161.500" stroke="#00ffff" />
    <path d="M728.500 161.500H716.500V403.500H728.500M728.500 161.500V362" stroke="#00ffff" />
    <path d="M728.500 155.500H791M791 362.500H936M935.500 155.500V238" stroke="#0000ff" />
    <path d="M791 155.500H1560M790.500 155.500V362.500H728.500V384M873.500 384V238.500H936M1182 238.500H1560" stroke="#c8c8c8" />
    <path d="M1059.500 362V575.500H390" stroke="#e01010" />
    <rect x="1046.500" y="137" width="41" height="159" fill="#009a00" stroke="#2fe84f" />
    <path d="M1004 137L1046 179M1130 137L1088 179" stroke="#22b8e8" />
    <path d="M936 238.500H1182.500V362.500H936z" stroke={P} />
    <path d="M1046.500 238.500H1087.500" stroke="#3fd06f" />
    <path d="M1047 276L1067 296M1087 276L1067 296" stroke="#80e000" />
    <path d="M1067 296L1087 315M1067 296L1046 317" stroke="#ffff00" />
    <rect x="1046" y="286.500" width="42" height="20" stroke="#ffff00" strokeWidth="2" />
    <path d="M1047 286.500H1087" stroke="#2fe84f" strokeWidth="2" />
    <path d="M1047 296.500H1087" stroke="#44c8d8" />
    <path d="M1183 284L1255 325.500L1241.500 342.500z" fill="#00ff00" />
    <path d="M1249 335L1289 366.500H1469" stroke="#00ff00" />
    <path d="M1330.500 350V322.500L1341.500 267L1352.500 322.500V350M1330.500 322.500H1352.500M1363.500 267V350.500H1385M1417 267.500H1400.500L1395.500 281V337L1400.500 350.500H1417.500V309H1412" stroke={P} />
    <path d="M1513.500 323.500L1560 264V291z" fill="#00ff00" />
    <path d="M650.500 481L665.500 563L673.500 522L681 563L696.500 482M711.500 481V564.500H743M758 550L766.500 564.500H781L788.500 552V541" stroke="#00ff00" />
    <path d="M602 886.500H618L624 900V915L618 928.500H607.500M607.500 886.500V954M618 928.500L624 942V954M634.500 900.500L639.500 886.500V954M655.500 954V941.500L666.500 886.500L677.500 941.500V954M655.500 941.500H677.500M688.500 954V886.500H705L710 900V915L705 928.500H688.500M720 886.500H742V893L724 954M752.500 900.500L757.500 886.500H769.500L775 900V915L769.500 928.500H757.500L752.500 942V954" stroke={P} />
    <path d="M440 905V886" stroke="#00e000" strokeWidth="4" />
    <path d="M440 877L435 888H445z" fill="#00e000" />
    <path d="M443 906H458" stroke="#ff0000" strokeWidth="4" />
    <path d="M458 901L469 906L458 911z" fill="#ff0000" />
    <circle cx="440" cy="906" r="5.500" fill="#0000c0" />
    <text x="440" y="875" textAnchor="middle" fontSize="14" fill="#00e000" fontFamily="Liberation Mono, monospace">Y</text>
    <text x="476" y="911" textAnchor="middle" fontSize="14" fill="#ff0000" fontFamily="Liberation Mono, monospace">X</text>
  </svg>
);

const Cube = ({ inner, fill = "#3f454c" }: { inner?: React.ReactNode; fill?: string }) => (
  <svg width="24" height="24" viewBox="0 0 24 24" fill="none" className="shrink-0">
    <path d="M1 6l5-5h17v17l-5 5H1z" fill={fill} stroke="#24272b" />
    <path d="M1 6h17v17M18 6l5-5" stroke="#24272b" />
    {inner}
  </svg>
);

const MiniCaret = () => <Caret c="#26282b" />;

const ViewTools = () => (
  <div className="absolute left-[1144px] top-[4px] flex h-[224px] w-[31px] flex-col items-center rounded-[3px] bg-[#4a4b4d] pt-[12px]">
    <svg width="24" height="24" viewBox="0 0 24 24" className="shrink-0">
      <circle cx="11" cy="12" r="9.500" fill="#8d9196" />
      <path d="M1 21C6 20 19 9 23 3" stroke="#2e3034" strokeWidth="1.500" fill="none" />
      <circle cx="20" cy="6" r="3.500" fill="#6c7075" />
    </svg>
    <div className="mt-[6px]">
      <Cube inner={<text x="11" y="20" fontSize="7" fill="#24272b" textAnchor="middle">3D</text>} />
    </div>
    <div className="mt-[4px]">
      <Cube fill="#6d7a85" inner={<path d="M6 1v17h17M6 18l-5 5" stroke="#2d3136" />} />
    </div>
    <div className="mt-[6px]"><MiniCaret /></div>
    <div className="mt-[5px]"><Cube /></div>
    <div className="mt-[5px]"><MiniCaret /></div>
    <div className="mt-[7px]">
      <svg width="24" height="24" viewBox="0 0 24 24" fill="none" className="shrink-0"><path d="M21 8A10 10 0 1 0 21 17" stroke="#2c2e31" strokeWidth="1.800" /><path d="M17 8h5V3" stroke="#2c2e31" strokeWidth="1.500" /></svg>
    </div>
    <div className="mt-[5px]"><MiniCaret /></div>
    <div className="mt-[2px] h-px w-[22px] bg-[#26282b]" />
    <div className="mt-[2px]">
      <svg width="24" height="24" viewBox="0 0 24 24" fill="none" className="shrink-0"><rect x=".5" y=".5" width="23" height="23" rx="1" fill="#3f454c" stroke="#24272b" /><path d="M12 5v16M1 5h22M4 8h4M4 12h4M4 16h4M15 8h5M15 12h5M15 16h5" stroke="#1e2023" /></svg>
    </div>
  </div>
);

const DrawingOver = () => (
  <svg width="1176" height="820" viewBox="386 134 1176 820" fill="none" shapeRendering="crispEdges" className="absolute left-0 top-0">
    <path d="M1530 155.500H1560M1530 238.500H1560" stroke="#c8c8c8" />
    <path d="M1555.500 137V155" stroke={P} />
    <path d="M1530 302L1560 264V291L1530 311.500z" fill="#4dd04d" />
  </svg>
);

const Dialog = () => (
  <div className="absolute left-[346px] top-[249px] flex h-[159px] w-[361px] flex-col border border-t-0 border-[#c8ccd4] bg-[#f0f0f0]">
    <div className="ml-[-1px] mr-[-1px] flex h-[27px] shrink-0 items-center justify-between bg-[#2d80e0] pl-[8px] pr-[11px] text-white">
      <span className="pt-[1px]">提示</span>
      <svg width="9" height="9" viewBox="0 0 9 9" fill="none"><path d="M1 1l7 7M8 1l-7 7" stroke="#fff" strokeWidth="1.500" /></svg>
    </div>
    <div className="ml-[9px] mr-[9px] flex h-[89px] shrink-0 gap-[10px] border-b border-[#c9c9c9] pl-[15px] pt-[22px]">
      <div className="flex h-[30px] w-[30px] shrink-0 items-center justify-center rounded-full bg-[#2d7fd6] font-['Liberation_Serif',serif] text-[28px] font-bold italic leading-none text-white">i</div>
      <p className="mt-[-3px] w-[262px] text-[14px] leading-[26px] text-[#111]">当前楼层没有合适的电线/电缆，请先建立相应的构件</p>
    </div>
    <div className="flex flex-1 items-start justify-end pr-[10px] pt-[7px]">
      <div className="flex h-[26px] w-[78px] items-center justify-center rounded-[3px] bg-[#2d80e0] pt-[1px] text-white">确定</div>
    </div>
  </div>
);

const RightSliver = () => (
  <div className="flex flex-1 overflow-hidden">
    <div className="w-[2px] shrink-0 bg-[#333]" />
    <Splitter flip top="pt-[366px]" />
    <div className="flex flex-1 flex-col border-l border-[#c9c9c9] bg-white">
      <div className="h-[10px] bg-[#d8dade]" />
      <div className="h-[23px] border-b border-[#c6c8ca] bg-[#f0f0f0]" />
      <div className="h-[29px] bg-[#f0f0f0]" />
      <div className="h-[29px] border-b border-[#c6c8ca] bg-[#f0f0f0]" />
      <div className="h-[285px]" />
      <div className="h-[57px] bg-[#f0f0f0]" />
      <div className="h-[5px]" />
      <div className="h-[12px] bg-[#d8dade]" />
      <div className="h-[21px] border-b border-[#c6c8ca] bg-[#f0f0f0]" />
      <div className="h-[36px] bg-[#f0f0f0]" />
      <div className="h-[17px] border-b border-[#c9c9c9]" />
      <div className="h-[26px] border-b border-[#c9c9c9]" />
      <div className="h-[26px] border-b border-[#c9c9c9]" />
    </div>
  </div>
);

const Arrows = () => (
  <svg width="1574" height="954" viewBox="0 0 1574 954" className="pointer-events-none absolute left-0 top-0">
    <path d="M148 219L238 263L243 260L254 276L235 276L233 269z" fill="#f7291b" />
    <path d="M742 608L920 461L915 458L933 455L926 472L923 466L744 610z" fill="#f7291b" />
  </svg>
);

export default function App() {
  return (
    <div className="relative flex h-[954px] w-[1574px] flex-col overflow-hidden bg-[#f5f5f5] font-['Noto_Sans','Noto_Sans_CJK_SC',sans-serif] text-[12px]">
      <Ribbon />
      <Toolbar />
      <main className="flex h-[820px] shrink-0">
        <LeftPanel />
        <div className="w-[4px] shrink-0" />
        <div className="flex w-[260px] shrink-0 flex-col gap-[4px]">
          <ListPanel />
          <PropsPanel />
        </div>
        <Splitter top="pt-[364px]" />
        <div className="relative w-[1176px] shrink-0 overflow-hidden bg-black">
          <Drawing />
          <ViewTools />
          <DrawingOver />
          <Dialog />
        </div>
        <RightSliver />
      </main>
      <Arrows />
    </div>
  );
}
